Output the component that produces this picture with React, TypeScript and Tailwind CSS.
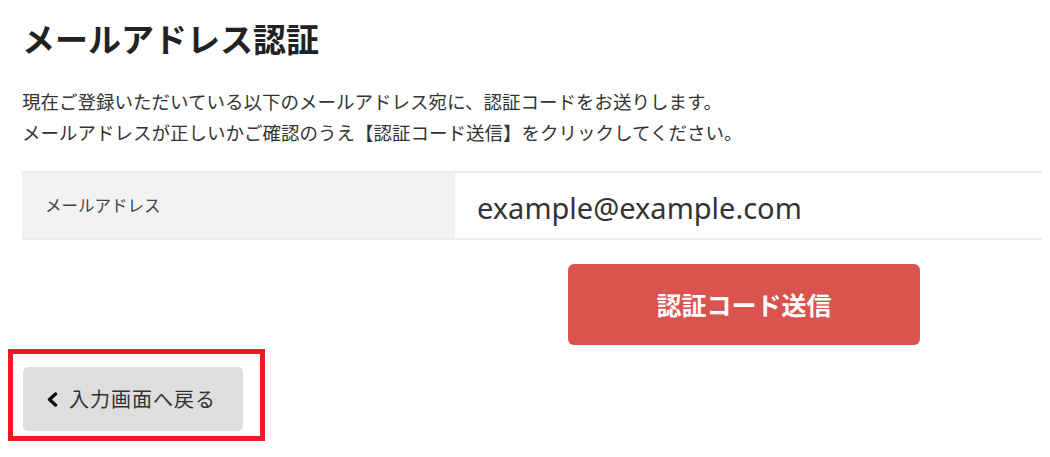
const jp = "font-['Noto_Sans_CJK_JP','Noto_Sans',sans-serif]"

function Chevron() {
  return (
    <svg width="12" height="15" viewBox="0 0 12 15" className="shrink-0">
      <path d="M9.5 2 L3.5 7.5 L9.5 13" fill="none" stroke="#111" strokeWidth="3.4" strokeLinecap="round" strokeLinejoin="round" />
    </svg>
  )
}

export default function App() {
  return (
    <div className={`w-[1050px] h-[457px] overflow-hidden bg-white pl-[22px] pr-[8px] text-[#333] ${jp}`}>
      {/* Title */}
      <h1 className="h-[76px] flex items-center text-[33px] font-bold text-[#222] leading-none">
        メールアドレス認証
      </h1>

      {/* Description */}
      <div className="mt-[10px] text-[18.5px] leading-[31px] text-[#333]">
        <p>現在ご登録いただいている以下のメールアドレス宛に、認証コードをお送りします。</p>
        <p>メールアドレスが正しいかご確認のうえ【認証コード送信】をクリックしてください。</p>
      </div>

      {/* Address table */}
      <div className="mt-[23px] grid grid-cols-[433px_1fr] h-[69px] border-y-2 border-[#ececec]">
        <div className="bg-[#f2f2f2] flex items-center pl-[23px] text-[16.5px] text-[#444]">
          メールアドレス
        </div>
        <div className="flex items-center pl-[22px] pt-[4px] font-['Noto_Sans',sans-serif] text-[29px] text-[#333]">
          example@example.com
        </div>
      </div>

      {/* Send button */}
      <div className="mt-[24px] grid grid-cols-[433px_1fr]">
        <div />
        <div className="pl-[113px]">
          <button className="w-[352px] h-[81px] rounded-[6px] bg-[#d9534f] text-white text-[25px] font-bold flex items-center justify-center">
            認証コード送信
          </button>
        </div>
      </div>

      {/* Back */}
      <div className="relative mt-[22px] ml-[1px] w-[220px]">
        <button className="w-[220px] h-[64px] rounded-[5px] bg-[#dedede] flex items-center pl-[23px] gap-[11px] text-[20px] tracking-[1px] text-[#333]">
          <Chevron />
          <span>入力画面へ戻る</span>
        </button>
        <div className="absolute left-[-15px] top-[-18px] w-[257px] h-[92px] border-[5px] border-[#ed1c24] pointer-events-none" />
      </div>
    </div>
  )
}
